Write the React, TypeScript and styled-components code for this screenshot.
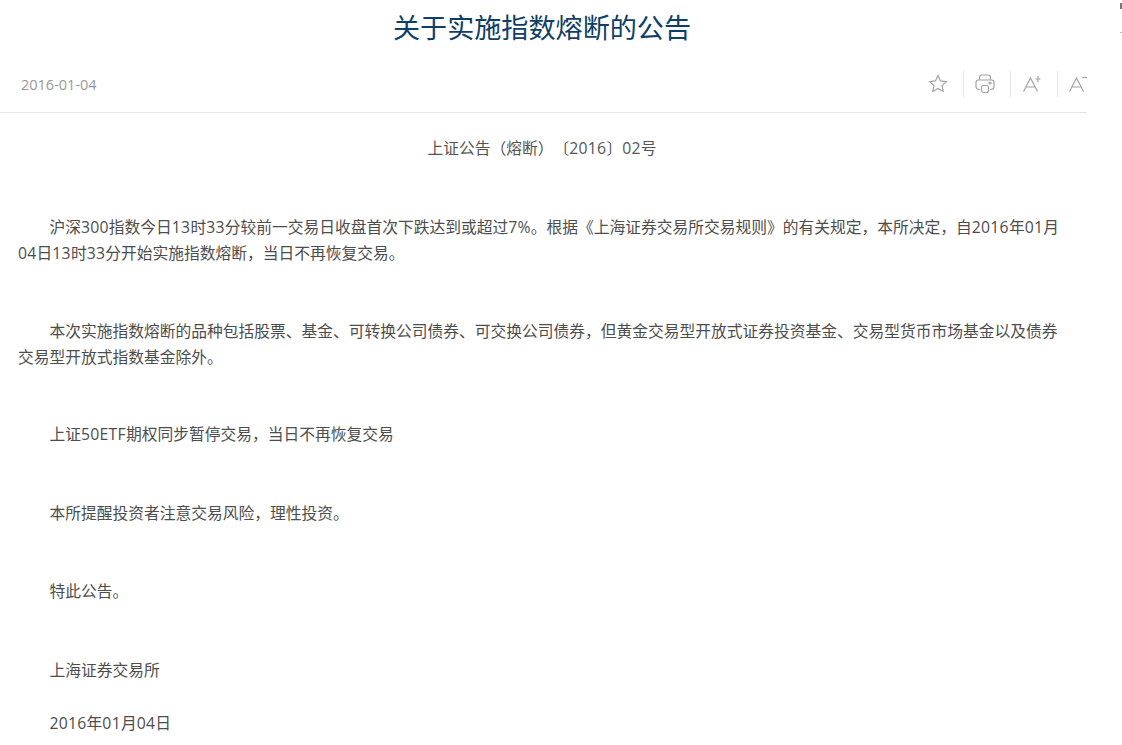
import React from "react";
import styled, { createGlobalStyle } from "styled-components";

const Global = createGlobalStyle`
  html, body { margin: 0; padding: 0; background: #fff; overflow: hidden; }
  body {
    font-family: "Open Sans", "Noto Sans CJK SC", sans-serif;
    height: 745px;
    text-spacing-trim: space-all;
  }
`;
const Page = styled.div`width: 1087px; height: 745px; overflow: hidden;`;
const Title = styled.h1`
  margin: 0; height: 57px; box-sizing: border-box; padding-right: 3px; text-align: center;
  font-size: 27.1px; font-weight: 400; line-height: 55px; color: #0f3f68;
`;
const Meta = styled.div`
  height: 56px; box-sizing: border-box; border-bottom: 1px solid #e5e5e5;
  display: flex; align-items: center; justify-content: space-between; padding: 0 0 1px 21px;
`;
const DateText = styled.span`font-size: 14.5px; color: #999;`;
const Tools = styled.div`display: flex; align-items: center; margin-right: -17px;`;
const Tool = styled.span<{ $first?: boolean }>`
  width: 47px; height: 26px; display: flex; align-items: center; justify-content: center;
  padding-right: 5px; box-sizing: border-box;
  border-left: 1px solid ${p => (p.$first ? "transparent" : "#e5e5e5")};
  svg { display: block; }
`;
const Body = styled.div`padding: 0 18px; color: #4d4d4d; font-size: 15.75px;`;
const Doc = styled.p`margin: 22px 0 0; padding-right: 3px; text-align: center; line-height: 27px; color: #555;`;
const Para = styled.p<{ $top: number }>`
  margin: ${p => p.$top}px 0 0; text-indent: 2em; line-height: 26px;
`;
const Num = styled.span`letter-spacing: 0.27px;`;
const Corner = styled.i`
  position: absolute; top: 3px; right: 0; width: 2px; height: 6px; background: #777;
  &::after { content: ""; position: absolute; top: 29px; left: 0; width: 2px; height: 1px; background: #bbb; }
`;
const Ic = (p: { children: React.ReactNode }) => (
  <svg width="22" height="22" viewBox="0 0 22 22" fill="none" stroke="#a3a3a3" strokeWidth="1.2">{p.children}</svg>
);
export default function App() {
  return (
    <Page>
      <Global />
      <Corner />
      <Title>关于实施指数熔断的公告</Title>
      <Meta>
        <DateText>2016-01-04</DateText>
        <Tools>
          <Tool $first><Ic><path d="M11 2.500l2.500 5.400 5.800.7-4.300 4 1.200 5.800-5.200-2.900-5.200 2.900 1.200-5.800-4.300-4 5.800-.7z" /></Ic></Tool>
          <Tool><Ic><path d="M5.500 7V4.500c0-1.500.8-2.500 2.300-2.500h6.400c1.500 0 2.300 1 2.300 2.500V7" /><path d="M6 16.500H5c-1.800 0-3-1.200-3-3v-4C2 8 3 7 4.500 7h13C19 7 20 8 20 9.500v4c0 1.800-1.200 3-3 3h-1" /><rect x="7.500" y="12.500" width="7" height="7" rx="2" /><circle cx="16" cy="10" r="1" /></Ic></Tool>
          <Tool><Ic><path d="M2.500 18.500L9.500 5l7 13.500M5.500 14h8" /><path d="M17 3v6M14.500 6h5" /></Ic></Tool>
          <Tool><Ic><path d="M1.500 18.500L8.500 5l7 13.500M4.500 14h8" /><path d="M14.500 4.500h5.500" /></Ic></Tool>
        </Tools>
      </Meta>
      <Body>
        <Doc>上证公告（熔断）〔<Num>2016</Num>〕<Num>02</Num>号</Doc>
        <Para $top={52}>沪深<Num>300</Num>指数今日<Num>13</Num>时<Num>33</Num>分较前一交易日收盘首次下跌达到或超过<Num>7%</Num>。根据《上海证券交易所交易规则》的有关规定，本所决定，自<Num>2016</Num>年<Num>01</Num>月<Num>04</Num>日<Num>13</Num>时<Num>33</Num>分开始实施指数熔断，当日不再恢复交易。</Para>
        <Para $top={52}>本次实施指数熔断的品种包括股票、基金、可转换公司债券、可交换公司债券，但黄金交易型开放式证券投资基金、交易型货币市场基金以及债券交易型开放式指数基金除外。</Para>
        <Para $top={51}>上证<Num>50ETF</Num>期权同步暂停交易，当日不再恢复交易</Para>
        <Para $top={53}>本所提醒投资者注意交易风险，理性投资。</Para>
        <Para $top={52}>特此公告。</Para>
        <Para $top={53}>上海证券交易所</Para>
        <Para $top={27}><Num>2016</Num>年<Num>01</Num>月<Num>04</Num>日</Para>
      </Body>
    </Page>
  );
}
